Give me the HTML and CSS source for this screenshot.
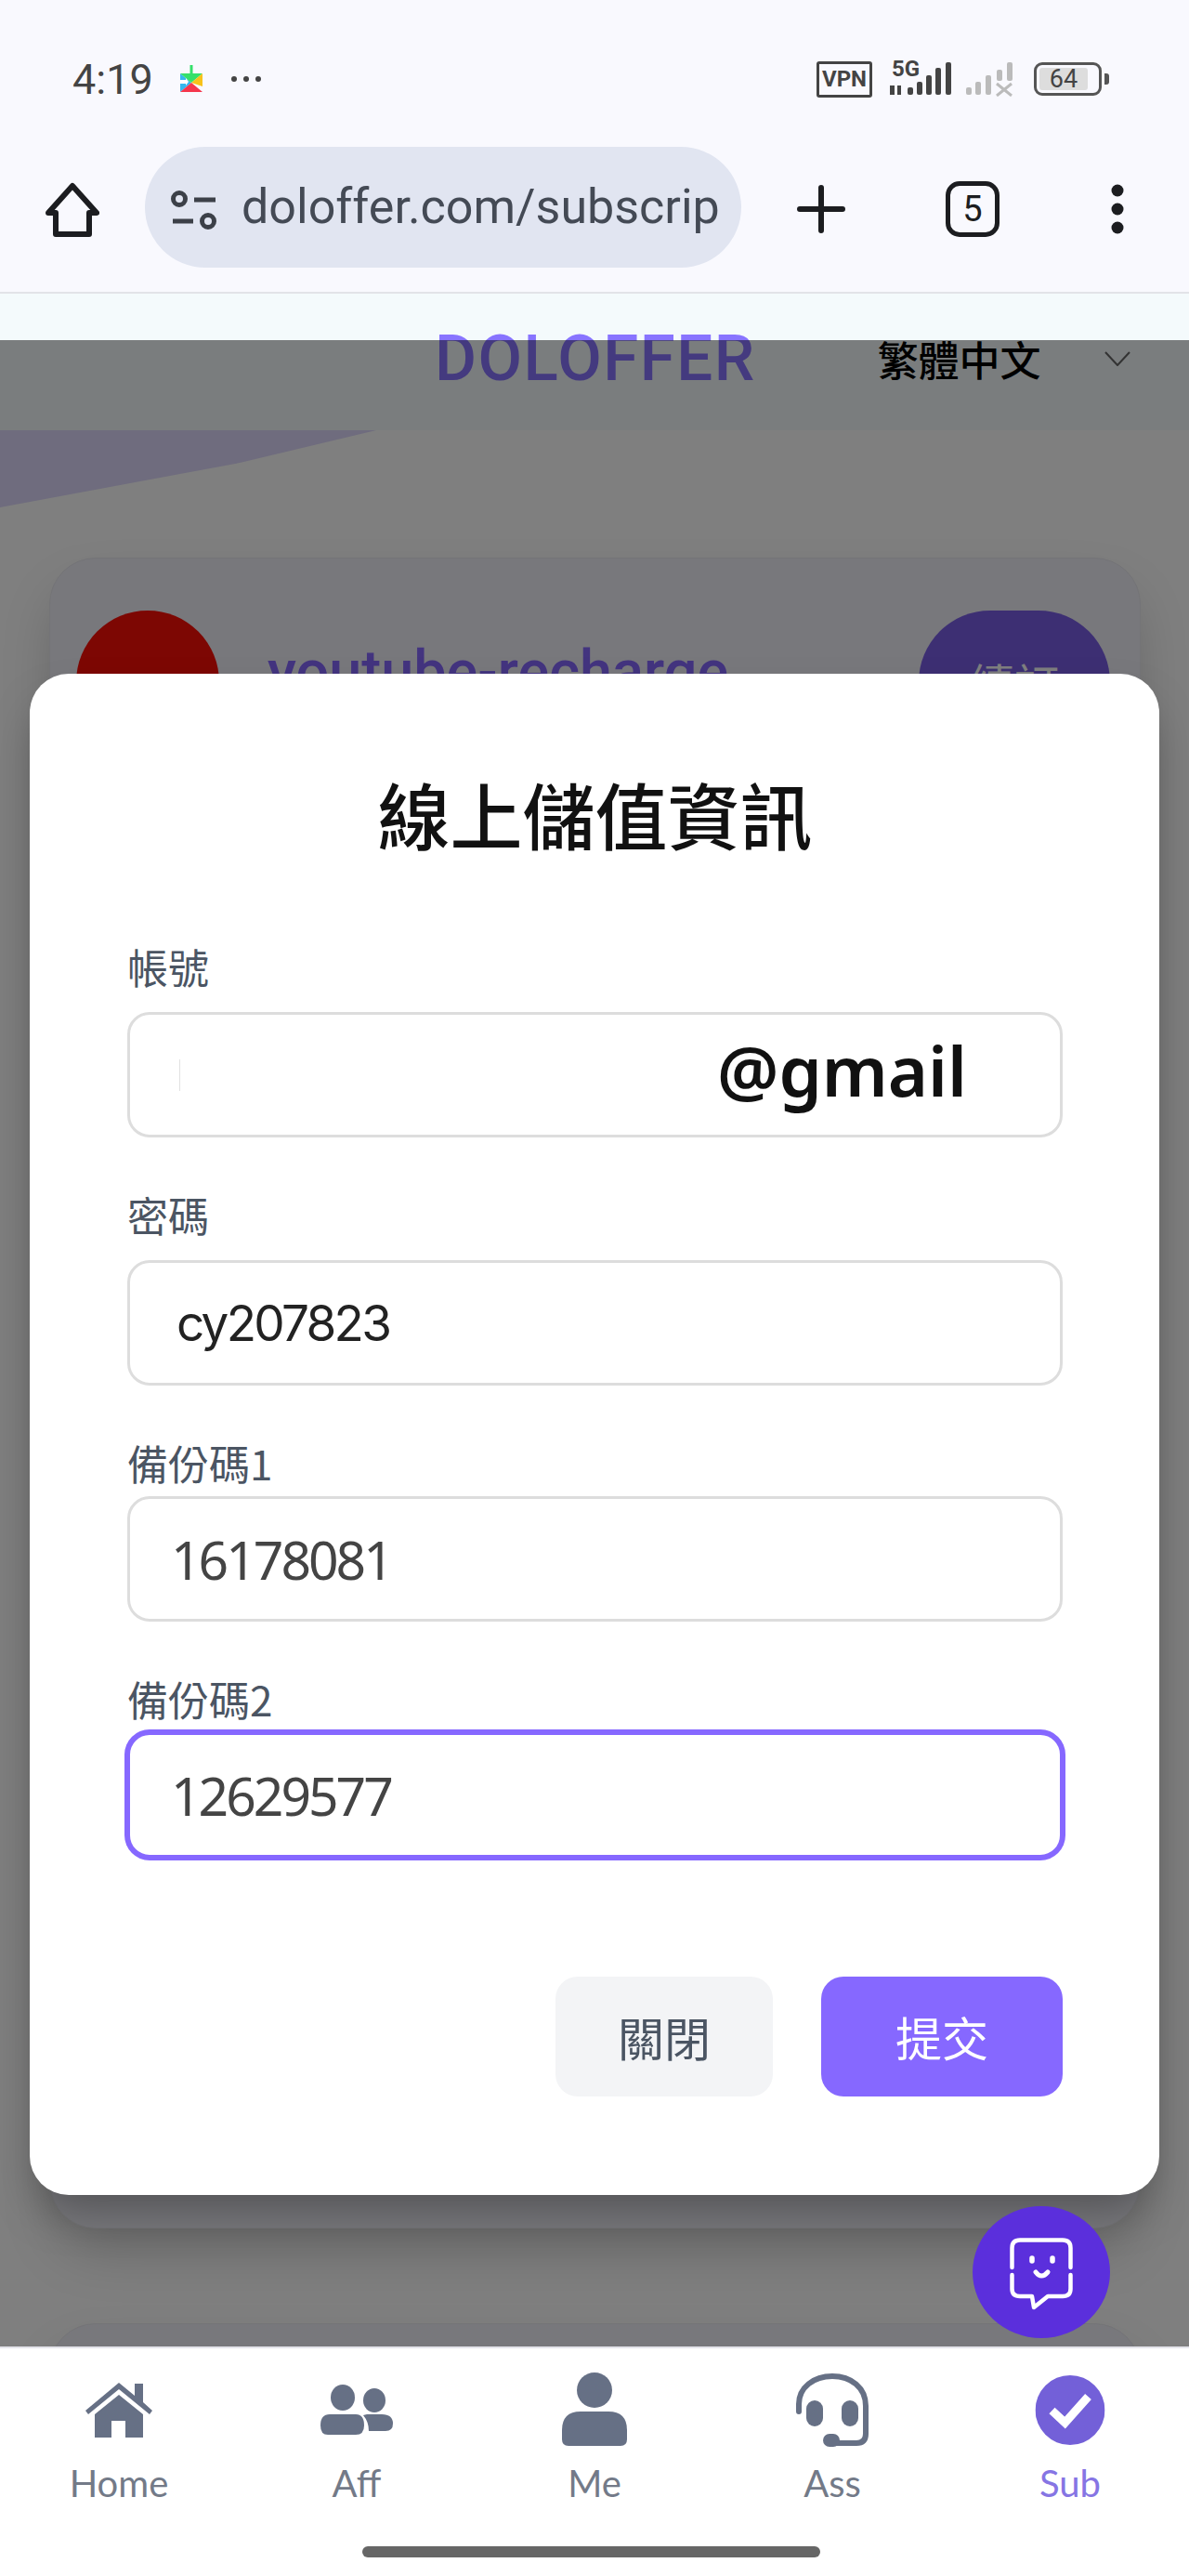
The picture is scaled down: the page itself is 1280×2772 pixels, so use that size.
FILE: index.html
```html
<!DOCTYPE html>
<html lang="zh-Hant">
<head>
	<meta charset="UTF-8">
	<title>線上儲值資訊</title>
	<link rel="stylesheet" href="styles.css">
</head>
<body>
	<div class="chrome">
		<div class="status">
			<span class="time">4:19</span>
			<svg class="play" viewBox="0 0 24 32">
				<path d="M0 10L12 20L0 30Z" fill="#35b8ee"/>
				<path d="M0 10H24L12 20Z" fill="#35e06a"/>
				<path d="M24 10V24L12 20Z" fill="#f7c21a"/>
				<path d="M0 30L12 20L24 30Z" fill="#f5364c"/>
				<rect x="10.5" y="1" width="3" height="11" fill="#35e06a"/>
				<path d="M0 17H6V15L9 19L6 23V21H0Z" fill="#fff"/>
			</svg>
			<svg class="dots" viewBox="0 0 34 8" fill="#444">
				<circle cx="4" cy="4" r="3"/><circle cx="17" cy="4" r="3"/><circle cx="30" cy="4" r="3"/>
			</svg>
			<div class="status-right">
				<span class="vpn">VPN</span>
				<div class="sig">
					<span class="sig-5g">5G</span>
					<svg class="sig-bars" viewBox="0 0 72 38" fill="#444">
						<rect x="0" y="26" width="5" height="10"/><rect x="8" y="26" width="4" height="10"/>
						<rect x="19" y="28" width="6" height="8" rx="2"/><rect x="29" y="22" width="6" height="14" rx="2"/>
						<rect x="39" y="15" width="6" height="21" rx="2"/><rect x="49" y="7" width="6" height="29" rx="2"/>
						<rect x="60" y="1" width="6" height="35" rx="2"/>
					</svg>
				</div>
				<svg class="sig-off" viewBox="0 0 52 38" fill="#bbb">
					<rect x="0" y="28" width="6" height="8" rx="2"/><rect x="10" y="22" width="6" height="14" rx="2"/>
					<rect x="21" y="15" width="6" height="21" rx="2"/><rect x="33" y="9" width="6" height="12" rx="2"/>
					<rect x="44" y="1" width="6" height="20" rx="2"/>
					<path d="M33 24L49 37M49 24L33 37" stroke="#bbb" stroke-width="3" fill="none"/>
				</svg>
				<div class="battery"><span class="battery-fill">64</span></div>
				<span class="battery-nub"></span>
			</div>
		</div>
		<div class="toolbar">
			<svg class="tb-home" viewBox="0 0 58 60" fill="none" stroke="#1c1d20" stroke-width="6" stroke-linejoin="round" stroke-linecap="round">
				<path d="M3 33L29 4L55 33H47V56H11V33Z"/>
			</svg>
			<div class="url">
				<svg class="tune" viewBox="0 0 50 42" fill="none" stroke="#3c4048" stroke-width="5">
					<circle cx="9" cy="9" r="6.5"/><path d="M25 10H48M2 33H24"/><circle cx="40" cy="33" r="6.5"/>
				</svg>
				<span class="url-text">doloffer.com/subscrip</span>
			</div>
			<svg class="tb-plus" viewBox="0 0 52 52" stroke="#1c1d20" stroke-width="6" stroke-linecap="round">
				<path d="M26 3V49M3 26H49"/>
			</svg>
			<span class="tabs">5</span>
			<svg class="tb-more" viewBox="0 0 14 54" fill="#1c1d20">
				<circle cx="7" cy="7" r="6.5"/><circle cx="7" cy="27" r="6.5"/><circle cx="7" cy="47" r="6.5"/>
			</svg>
		</div>
	</div>

	<div class="page">
		<div class="hero-shape"></div>
		<div class="header">
			<span class="logo">DOLOFFER</span>
			<span class="lang">繁體中文</span>
			<svg class="lang-arrow" viewBox="0 0 28 16" fill="none" stroke="#333" stroke-width="2"><path d="M1 1L14 15L27 1"/></svg>
		</div>
		<div class="card">
			<div class="card-row">
				<div class="avatar"></div>
				<span class="card-name">youtube-recharge</span>
				<span class="card-btn">續訂</span>
			</div>
		</div>
		<div class="card"></div>

		<div class="overlay">
			<div class="modal">
				<h2 class="modal-title">線上儲值資訊</h2>
				<label class="field-label">帳號</label>
				<div class="field-input field-mail">
					<span class="caret-mark"></span>
					<span class="mail-text">@gmail</span>
				</div>
				<label class="field-label gap">密碼</label>
				<div class="field-input field-pwd">cy207823</div>
				<label class="field-label gap tight">備份碼1</label>
				<div class="field-input field-code">16178081</div>
				<label class="field-label gap tight">備份碼2</label>
				<div class="field-input field-code focus">12629577</div>
				<div class="modal-btns">
					<span class="btn btn-close">關閉</span>
					<span class="btn btn-submit">提交</span>
				</div>
			</div>
		</div>

		<div class="fab">
			<svg viewBox="0 0 68 78" fill="none" stroke="#fff" stroke-width="4.5" stroke-linecap="round" stroke-linejoin="round">
				<path d="M2.500 32V11Q2.500 2.500 11 2.500H57Q65.500 2.500 65.500 11V32"/>
				<path d="M2.500 40V55Q2.500 63 11 63H24L26 75L41 63H57Q65.500 63 65.500 55V40"/>
				<path d="M24 22V25M46 22V25" stroke-width="5.500"/>
				<path d="M28 37Q34 45 41 37" stroke-width="5"/>
			</svg>
		</div>
	</div>

	<div class="nav">
		<div class="nav-item">
			<svg class="ic-home" viewBox="0 0 78 62" fill="#667085">
				<path d="M3 32L39 2L56 16V3H65V23L75 32L72 36L39 9L6 36Z"/>
				<path d="M39 15L65 36V61H46V43H31V61H13V36Z"/>
			</svg>
			<span>Home</span>
		</div>
		<div class="nav-item">
			<svg class="ic-aff" viewBox="0 0 78 54" fill="#667085">
				<ellipse cx="24" cy="14" rx="13" ry="14"/><ellipse cx="58" cy="17" rx="12" ry="13"/>
				<path d="M0 44Q0 32 10 32H38Q47 32 47 44Q47 54 38 54H8Q0 54 0 44Z"/>
				<path d="M50 32H66Q78 32 78 42Q78 50 70 50H52Q52 40 46 33Z"/>
			</svg>
			<span>Aff</span>
		</div>
		<div class="nav-item">
			<svg class="ic-me" viewBox="0 0 70 79" fill="#667085">
				<circle cx="35" cy="19" r="19"/>
				<path d="M0 62Q0 42 20 42H50Q70 42 70 62V72Q70 79 63 79H7Q0 79 0 72Z"/>
			</svg>
			<span>Me</span>
		</div>
		<div class="nav-item">
			<svg class="ic-ass" viewBox="0 0 80 80" fill="#667085">
				<path d="M4 42V34C4 16 20 4 40 4C60 4 76 16 76 36V66Q76 76 66 76H44" fill="none" stroke="#667085" stroke-width="6" stroke-linecap="round"/>
				<rect x="12" y="30" width="18" height="28" rx="9"/>
				<rect x="50" y="30" width="18" height="28" rx="9"/>
				<rect x="30" y="66" width="18" height="14" rx="7"/>
			</svg>
			<span>Ass</span>
		</div>
		<div class="nav-item active">
			<svg class="ic-sub" viewBox="0 0 75 75">
				<circle cx="37.500" cy="37.500" r="37.500" fill="#7360d8"/>
				<path d="M18 38L32 51L57 23" fill="none" stroke="#fff" stroke-width="9"/>
			</svg>
			<span>Sub</span>
		</div>
		<div class="home-bar"></div>
	</div>
</body>
</html>
```

FILE: styles.css
```css
*{
	padding:0;
	margin:0;
	box-sizing:border-box;
}
body{
	width:1280px;
	height:2772px;
	display:flex;
	flex-direction:column;
	overflow:hidden;
	background:#fff;
	font-family:"Noto Sans CJK TC","Liberation Sans",sans-serif;
}

/* browser top */
.chrome{
	height:316px;
	flex:none;
	background:#f9f9fe;
	border-bottom:2px solid #e2e3e8;
}
.status{
	height:158px;
	padding:12px 86px 0 78px;
	display:flex;
	align-items:center;
}
.time{
	font-family:"Roboto",sans-serif;
	font-size:45px;
	color:#444;
	width:116px;
}
.play{
	width:24px;
	height:32px;
}
.dots{
	width:34px;
	height:8px;
	margin-left:30px;
}
.status-right{
	margin-left:auto;
	display:flex;
	align-items:center;
}
.vpn{
	width:60px;
	height:39px;
	border:3px solid #444;
	border-radius:3px;
	font-family:"Roboto",sans-serif;
	font-size:24px;
	font-weight:bold;
	color:#444;
	text-align:center;
	line-height:33px;
}
.sig{
	width:72px;
	height:38px;
	margin-left:19px;
	position:relative;
}
.sig-5g{
	position:absolute;
	left:2px;
	top:-6px;
	font-family:"Roboto",sans-serif;
	font-size:24px;
	line-height:28px;
	font-weight:bold;
	color:#444;
}
.sig-bars{
	width:72px;
	height:38px;
	display:block;
}
.sig-off{
	width:52px;
	height:38px;
	margin-left:10px;
}
.battery{
	width:73px;
	height:36px;
	margin-left:21px;
	border:3px solid #555;
	border-radius:9px;
	padding:3px;
}
.battery-fill{
	display:block;
	width:52px;
	height:24px;
	background:#ddd;
	border-radius:3px;
	font-family:"Roboto",sans-serif;
	font-size:27px;
	line-height:24px;
	color:#444;
	text-align:center;
}
.battery-nub{
	width:5px;
	height:12px;
	margin-left:3px;
	background:#555;
	border-radius:0 3px 3px 0;
}
.toolbar{
	height:130px;
	display:flex;
	align-items:center;
}
.tb-home{
	width:58px;
	height:60px;
	margin-left:49px;
	margin-top:6px;
}
.url{
	width:642px;
	height:130px;
	margin-left:49px;
	padding:0 20px 0 28px;
	background:#e1e5f1;
	border-radius:65px;
	display:flex;
	align-items:center;
}
.tune{
	width:50px;
	height:42px;
	flex:none;
	margin-top:6px;
}
.url-text{
	margin-left:26px;
	font-family:"Roboto",sans-serif;
	font-size:52px;
	color:#444a55;
	white-space:nowrap;
	line-height:70px;
}
.tb-plus{
	width:52px;
	height:52px;
	margin-left:60px;
	margin-top:3px;
}
.tabs{
	width:58px;
	height:60px;
	margin-left:108px;
	margin-top:4px;
	border:5px solid #1c1d20;
	border-radius:15px;
	font-family:"Roboto",sans-serif;
	font-size:38px;
	line-height:50px;
	text-align:center;
	color:#1c1d20;
}
.tb-more{
	width:14px;
	height:54px;
	margin-left:120px;
	margin-top:3px;
}

/* page behind the dialog */
.page{
	flex:1;
	position:relative;
	overflow:hidden;
	background:#fefefe;
}
.hero-shape{
	position:absolute;
	left:0;
	top:147px;
	width:405px;
	height:83px;
	background:#ded8fc;
	clip-path:polygon(0 0,100% 0,64% 42%,0 100%);
}
.header{
	height:147px;
	background:#f4fafc;
	position:relative;
	display:flex;
	align-items:flex-start;
	padding:35px 0 0 468px;
}
.logo{
	font-family:"Roboto",sans-serif;
	font-weight:500;
	font-size:69px;
	letter-spacing:1.5px;
	line-height:70px;
	color:#8874ff;
}
.lang{
	position:relative;
	z-index:2;
	font-size:44px;
	line-height:70px;
	color:#000;
	margin-left:131px;
	font-weight:500;
}
.lang-arrow{
	position:relative;
	z-index:2;
	width:28px;
	height:16px;
	margin-left:68px;
	margin-top:27px;
}
.card{
	position:relative;
	height:1798px;
	margin:137px 52px 0 53px;
	background:#f0f0f8;
	border:1px solid #e8e8ee;
	border-radius:50px;
	box-shadow:0 30px 60px -10px rgba(0,0,0,.22);
}
.card + .card{
	margin-top:102px;
}
.card-row{
	display:flex;
	align-items:flex-start;
	padding:56px 32px 0 28px;
}
.avatar{
	width:154px;
	height:154px;
	border-radius:50%;
	background:#fa0e06;
	flex:none;
}
.card-name{
	margin-left:52px;
	margin-top:31px;
	font-family:"Roboto",sans-serif;
	font-weight:500;
	font-size:63px;
	line-height:70px;
	color:#8668ff;
}
.card-btn{
	margin-left:auto;
	width:206px;
	height:154px;
	border-radius:77px;
	background:#7a5fe6;
	color:#fff;
	font-size:48px;
	line-height:154px;
	text-align:center;
}
.overlay{
	position:absolute;
	left:0;
	right:0;
	top:50px;
	bottom:0;
	background:rgba(0,0,0,.5);
	padding:359px 32px 0;
}
.modal{
	height:1637px;
	background:#fff;
	border-radius:42px;
	padding:100px 104px 0 105px;
	box-shadow:0 25px 50px -12px rgba(0,0,0,.34);
}
.modal-title{
	font-size:78px;
	line-height:100px;
	font-weight:500;
	color:#111;
	text-align:center;
	margin-bottom:88px;
}
.field-label{
	display:block;
	height:60px;
	line-height:54px;
	font-size:44px;
	color:#4b5563;
	margin-bottom:16px;
}
.field-label.gap{
	margin-top:56px;
}
.field-label.tight{
	margin-bottom:3px;
}
.field-input{
	height:135px;
	border:3px solid #ddd;
	border-radius:24px;
	background:#fff;
	display:flex;
	align-items:center;
}
.field-mail{
	position:relative;
	padding-left:53px;
}
.caret-mark{
	width:1px;
	height:34px;
	background:#e2e2e2;
}
.mail-text{
	position:absolute;
	left:632px;
	top:10px;
	font-family:"Noto Sans",sans-serif;
	font-weight:600;
	font-size:74px;
	line-height:100px;
	color:#111;
}
.field-pwd{
	padding-left:50px;
	font-family:"Inter",sans-serif;
	font-size:53px;
	letter-spacing:-2.7px;
	color:#222;
}
.field-code{
	padding-left:44px;
	font-family:"Noto Sans",sans-serif;
	font-size:57px;
	letter-spacing:-3px;
	color:#444;
}
.field-code.focus{
	border-color:#8668ff;
	box-shadow:0 0 0 3px #8668ff;
}
.modal-btns{
	display:flex;
	justify-content:flex-end;
	gap:52px;
	margin-top:128px;
}
.btn{
	height:129px;
	border-radius:24px;
	font-size:50px;
	line-height:129px;
	text-align:center;
}
.btn-close{
	width:234px;
	background:#f3f4f6;
	color:#4b5563;
}
.btn-submit{
	width:260px;
	background:#8668ff;
	color:#fff;
}
.fab{
	position:absolute;
	left:1047px;
	top:2058px;
	width:148px;
	height:142px;
	border-radius:50%;
	background:#5b2fdc;
	display:flex;
	align-items:center;
	justify-content:center;
}
.fab svg{
	width:68px;
	height:78px;
	margin-top:4px;
}

/* bottom bar */
.nav{
	height:247px;
	flex:none;
	position:relative;
	background:#fff;
	border-top:2px solid #e4e4ea;
	display:grid;
	grid-template-columns:repeat(5,1fr);
}
.nav-item{
	height:170px;
	display:flex;
	flex-direction:column;
	align-items:center;
	justify-content:flex-end;
	font-family:"Lato",sans-serif;
	font-size:40px;
	line-height:50px;
	color:#737a88;
	position:relative;
}
.nav-item svg{
	position:absolute;
	left:50%;
	transform:translateX(-50%);
}
.nav-item.active{
	color:#8675e4;
}
.ic-home{
	top:35px;
	width:78px;
	height:62px;
}
.ic-aff{
	top:39px;
	width:78px;
	height:54px;
}
.ic-me{
	top:26px;
	width:70px;
	height:79px;
}
.ic-ass{
	top:26px;
	width:80px;
	height:80px;
}
.ic-sub{
	top:29px;
	width:75px;
	height:75px;
}
.home-bar{
	position:absolute;
	left:390px;
	top:213px;
	width:493px;
	height:12px;
	border-radius:6px;
	background:#666;
}
```
